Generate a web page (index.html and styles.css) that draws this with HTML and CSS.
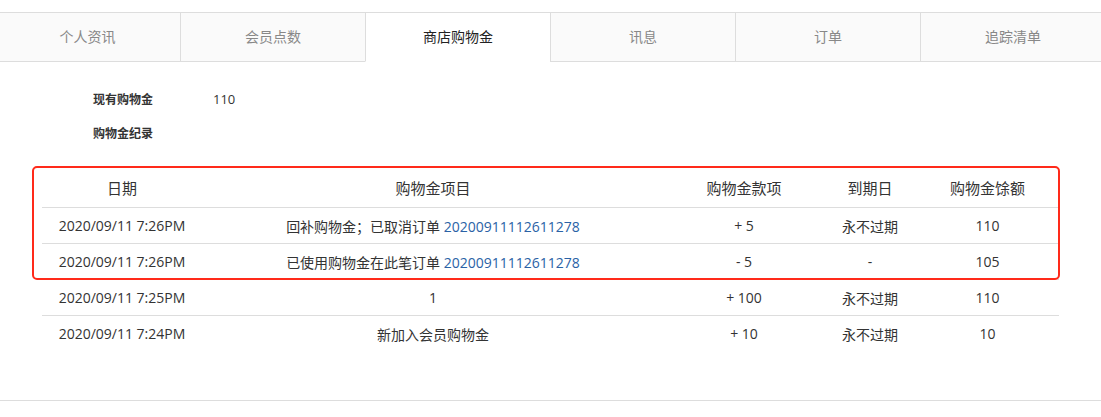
FILE: index.html
```html
<!DOCTYPE html>
<html lang="zh">
<head>
  <meta charset="UTF-8">
  <title>商店购物金</title>
  <link rel="stylesheet" href="styles.css">
</head>
<body>

  <ul class="tabs">
    <li>个人资讯</li>
    <li>会员点数</li>
    <li class="active">商店购物金</li>
    <li>讯息</li>
    <li>订单</li>
    <li>追踪清单</li>
  </ul>

  <div class="info">
    <div class="info-row"><span class="info-label">现有购物金</span><span class="info-value">110</span></div>
    <div class="info-row"><span class="info-label">购物金纪录</span></div>
  </div>

  <div class="records">
    <table>
      <thead>
        <tr>
          <th class="c-date">日期</th>
          <th class="c-item">购物金项目</th>
          <th class="c-amount">购物金款项</th>
          <th class="c-expiry">到期日</th>
          <th class="c-balance">购物金馀额</th>
        </tr>
      </thead>
      <tbody>
        <tr>
          <td>2020/09/11 7:26PM</td>
          <td>回补购物金；已取消订单 <a href="#">20200911112611278</a></td>
          <td>+ 5</td>
          <td>永不过期</td>
          <td>110</td>
        </tr>
        <tr>
          <td>2020/09/11 7:26PM</td>
          <td>已使用购物金在此笔订单 <a href="#">20200911112611278</a></td>
          <td>- 5</td>
          <td>-</td>
          <td>105</td>
        </tr>
        <tr>
          <td>2020/09/11 7:25PM</td>
          <td>1</td>
          <td>+ 100</td>
          <td>永不过期</td>
          <td>110</td>
        </tr>
        <tr>
          <td>2020/09/11 7:24PM</td>
          <td>新加入会员购物金</td>
          <td>+ 10</td>
          <td>永不过期</td>
          <td>10</td>
        </tr>
      </tbody>
    </table>
    <div class="highlight"></div>
  </div>

  <div class="footer-line"></div>

</body>
</html>
```

FILE: styles.css
```css
body { margin: 0; font-family: "Open Sans", "Noto Sans CJK SC", sans-serif; color: #333; background: #fff; overflow: hidden; }

.tabs { list-style: none; margin: 12px 0 0 -5px; padding: 0; width: 1110px; display: grid; grid-template-columns: repeat(6, 1fr); border-top: 1px solid #ddd; }
.tabs li { height: 48px; line-height: 48px; text-align: center; font-size: 14px; color: #888; background: #fafafa; border-left: 1px solid #ddd; border-bottom: 1px solid #ddd; }
.tabs li:first-child { border-left: none; }
.tabs li.active { background: #fff; color: #222; border-bottom-color: #fff; }

.info { padding: 20px 0 0 93px; }
.info-row { height: 34px; display: flex; align-items: center; font-size: 12px; }
.info-label { width: 120px; font-weight: bold; }
.info-value { font-size: 13px; }

.records { position: relative; margin: 17px 42px 0; }
table { width: 100%; border-collapse: collapse; table-layout: fixed; }
th { height: 40px; padding: 0; font-size: 15px; font-weight: normal; text-align: center; border-bottom: 1px solid #ddd; }
td { height: 35px; padding: 0; font-size: 14px; text-align: center; }
tbody tr + tr td { border-top: 1px solid #ddd; }
td a { color: #2a62a6; text-decoration: none; }
.c-date { width: 160px; }
.c-item { width: 462px; }
.c-amount { width: 160px; }
.c-expiry { width: 92px; }
.c-balance { width: 143px; }

.highlight { position: absolute; left: -10px; top: -1px; width: 1024px; height: 110px; border: 2px solid #ff2a1a; border-radius: 5px; }

.footer-line { margin-top: 49px; border-top: 1px solid #ddd; }
```
